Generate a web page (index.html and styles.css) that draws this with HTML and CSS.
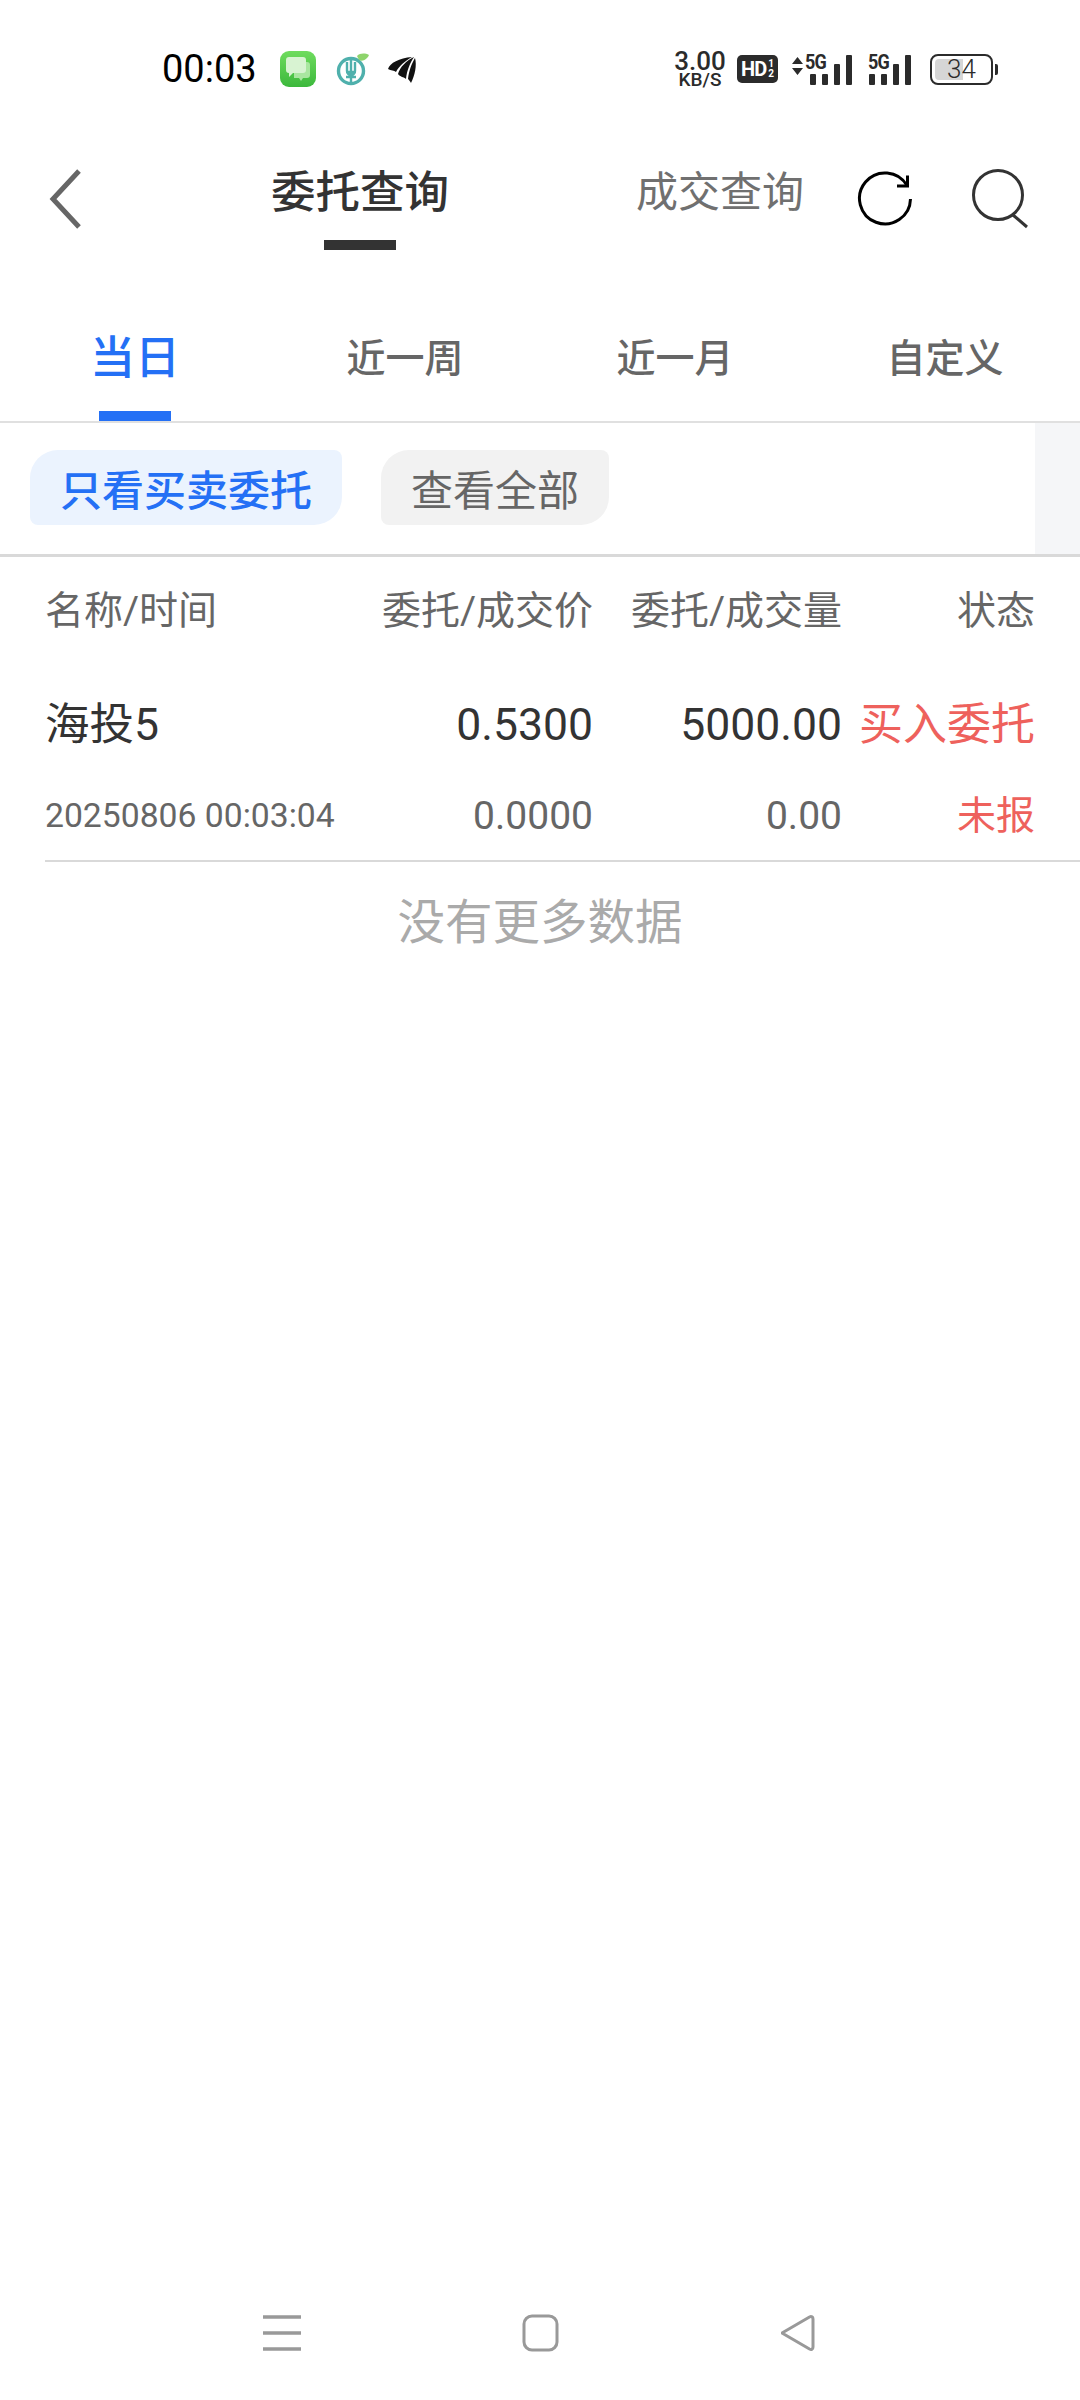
FILE: index.html
```html
<!DOCTYPE html>
<html lang="zh-CN">
<head>
  <meta charset="UTF-8">
  <meta name="viewport" content="width=device-width, initial-scale=1.0">
  <title>委托查询</title>
  <link rel="stylesheet" href="styles.css">
</head>
<body>
  <div class="page">
    <div class="statusbar">
      <span class="clock">00:03</span>
      <svg class="app-icon msg" viewBox="0 0 36 36">
        <defs>
          <linearGradient id="msgBg" x1="0" y1="0" x2="0" y2="1">
            <stop offset="0" stop-color="#6fdc5e"/>
            <stop offset="1" stop-color="#3cb83c"/>
          </linearGradient>
        </defs>
        <rect width="36" height="36" rx="9" fill="url(#msgBg)"/>
        <path d="M14 11h13a3 3 0 0 1 3 3v10a3 3 0 0 1-3 3h-4l-2 3-2-3h-5z" fill="#a9e6a0"/>
        <path d="M9 6h14a3 3 0 0 1 3 3v10a3 3 0 0 1-3 3H13l-4 4v-4a3 3 0 0 1-3-3V9a3 3 0 0 1 3-3z" fill="#d8f3d2"/>
      </svg>
      <svg class="app-icon bank" viewBox="0 0 36 36">
        <circle cx="16" cy="20" r="12.500" fill="none" stroke="#4fb0ac" stroke-width="3.400"/>
        <path d="M12 11v9a4 4 0 0 0 8 0v-9M16 9v22M11 21h10M11 26h10" fill="none" stroke="#4fb0ac" stroke-width="2.400"/>
        <path d="M22 5c3-3 8-3 12-1-2 4-6 7-10 5z" fill="#8ed46c"/>
      </svg>
      <svg class="app-icon plane" viewBox="0 0 30 30">
        <path d="M1 15C3 9 12 4 25 3 18 7 12 12 9 18 7 16 4 17 1 15z" fill="#111"/>
        <path d="M11 20C13 13 19 7 27 3 23 9 20 16 19 25 17 23 13 23 11 20z" fill="#111"/>
        <path d="M21 25C22 16 25 9 28 4 30 11 28 21 24 29 23 27 22 26 21 25z" fill="#111"/>
      </svg>

      <div class="status-right">
        <div class="speed"><b>3.00</b><small>KB/S</small></div>
        <div class="hd">HD<span class="hd-sub"><i>1</i><i>2</i></span></div>
        <div class="signal">
          <svg class="updown" viewBox="0 0 11 18"><path d="M5.500 0 11 7H0zM0 11h11l-5.500 7z" fill="#2b2b2b"/></svg>
          <div class="net">
            <span class="net-label">5G</span>
            <span class="bars"><i class="b1"></i><i class="b2"></i><i class="b3"></i><i class="b4"></i></span>
          </div>
        </div>
        <div class="signal second">
          <div class="net">
            <span class="net-label">5G</span>
            <span class="bars"><i class="b1"></i><i class="b2"></i><i class="b3"></i><i class="b4"></i></span>
          </div>
        </div>
        <div class="battery">
          <div class="battery-fill"></div>
          <span class="battery-num">34</span>
        </div>
        <div class="battery-nub"></div>
      </div>
    </div>

    <div class="topbar">
      <svg class="back" viewBox="0 0 34 60"><path d="M30 2 4 30l26 28" fill="none" stroke="#666" stroke-width="5"/></svg>
      <div class="title-wrap">
        <h1>委托查询</h1>
        <div class="title-mark"></div>
      </div>
      <span class="alt-title">成交查询</span>
      <svg class="refresh" viewBox="0 0 56 56">
        <path d="M50 14.500A25.500 25.500 0 1 0 53.500 28" fill="none" stroke="#000" stroke-width="3"/>
        <path d="M50.500 4.500v10.500H40" fill="none" stroke="#000" stroke-width="3"/>
      </svg>
      <svg class="search" viewBox="0 0 56 60">
        <circle cx="26" cy="26" r="24.500" fill="none" stroke="#333" stroke-width="3"/>
        <path d="M41 46l14 12" fill="none" stroke="#333" stroke-width="3"/>
      </svg>
    </div>

    <div class="tabs">
      <div class="tab active">当日</div>
      <div class="tab">近一周</div>
      <div class="tab">近一月</div>
      <div class="tab">自定义</div>
    </div>

    <div class="filters">
      <span class="chip chip-on">只看买卖委托</span>
      <span class="chip">查看全部</span>
      <div class="filters-side"></div>
    </div>

    <div class="grid head">
      <span class="left">名称/时间</span>
      <span>委托/成交价</span>
      <span>委托/成交量</span>
      <span>状态</span>
    </div>

    <div class="order">
      <div class="grid line-one">
        <span class="left">海投5</span>
        <span>0.5300</span>
        <span>5000.00</span>
        <span class="red">买入委托</span>
      </div>
      <div class="grid line-two">
        <span class="left date">20250806 00:03:04</span>
        <span>0.0000</span>
        <span>0.00</span>
        <span class="red">未报</span>
      </div>
    </div>

    <div class="no-more">没有更多数据</div>

    <div class="navbar">
      <svg viewBox="0 0 38 36"><path d="M0 2h38M0 18h38M0 34h38" fill="none" stroke="#999" stroke-width="3.500"/></svg>
      <svg viewBox="0 0 38 38"><rect x="2" y="2" width="33" height="34" rx="8" fill="none" stroke="#999" stroke-width="3"/></svg>
      <svg viewBox="0 0 38 38"><path d="M1 19 28.500 3c2-1 3.500 0 3.500 2v28c0 2-1.500 3-3.500 2z" fill="none" stroke="#999" stroke-width="3" stroke-linejoin="round"/></svg>
    </div>
  </div>
</body>
</html>
```

FILE: styles.css
```css
* {
  box-sizing: border-box;
}
body {
  margin: 0;
  background: #fff;
  font-family: Roboto, "Noto Sans CJK SC", sans-serif;
  color: #333;
}
.page {
  width: 1080px;
  height: 2400px;
  display: flex;
  flex-direction: column;
  overflow: hidden;
}

/* status bar */
.statusbar {
  height: 138px;
  padding-left: 162px;
  display: flex;
  align-items: center;
}
.clock {
  font-size: 38px;
  color: #000;
  width: 118px;
}
.app-icon {
  display: block;
}
.msg {
  width: 36px;
  height: 36px;
}
.bank {
  width: 36px;
  height: 36px;
  margin-left: 19px;
}
.plane {
  width: 30px;
  height: 30px;
  margin-left: 16px;
}
.status-right {
  margin-left: auto;
  width: 406px;
  display: flex;
  align-items: center;
  color: #2b2b2b;
}
.speed {
  width: 52px;
  margin-right: 11px;
  display: flex;
  flex-direction: column;
  align-items: center;
  line-height: 1;
}
.speed b {
  font-size: 26px;
  font-weight: 500;
  line-height: 21px;
}
.speed small {
  font-size: 19px;
  font-weight: 500;
  line-height: 15px;
}
.hd {
  width: 41px;
  height: 28px;
  background: #2b2b2b;
  border-radius: 5px;
  color: #fff;
  font-size: 20px;
  font-weight: 700;
  letter-spacing: -1px;
  display: flex;
  align-items: center;
  justify-content: center;
}
.hd-sub {
  display: flex;
  flex-direction: column;
  margin-left: 2px;
  font-size: 10px;
  line-height: 10px;
  letter-spacing: 0;
}
.hd-sub i {
  font-style: normal;
}
.signal {
  display: flex;
  align-items: flex-start;
  margin-left: 14px;
  width: 60px;
}
.signal.second {
  margin-left: 16px;
  width: 43px;
}
.updown {
  width: 11px;
  height: 18px;
  margin: 4px 2px 0 0;
  flex: none;
}
.net {
  position: relative;
  width: 47px;
  height: 32px;
}
.net-label {
  position: absolute;
  left: 0;
  top: -3px;
  font-size: 20px;
  font-weight: 700;
  letter-spacing: -1px;
  transform: scaleX(0.9);
  transform-origin: left;
}
.bars {
  position: absolute;
  right: 0;
  bottom: 0;
  display: flex;
  align-items: flex-end;
  gap: 6px;
}
.bars i {
  display: block;
  width: 6px;
  border-radius: 1px;
  background: #2b2b2b;
}
.b1 { height: 11px; }
.b2 { height: 11px; }
.b3 { height: 21px; }
.b4 { height: 30px; }
.battery {
  position: relative;
  margin-left: 19px;
  width: 63px;
  height: 31px;
  border: 2px solid #2b2b2b;
  border-radius: 8px;
  padding: 3px;
}
.battery-fill {
  width: 28px;
  height: 100%;
  background: #d6d6d6;
  border-radius: 4px 0 0 4px;
}
.battery-num {
  position: absolute;
  left: 0;
  right: 0;
  top: 0;
  line-height: 27px;
  text-align: center;
  font-size: 26px;
  font-weight: 300;
  color: #2b2b2b;
}
.battery-nub {
  width: 3px;
  height: 11px;
  margin-left: 2px;
  background: #2b2b2b;
  border-radius: 0 2px 2px 0;
}

/* title row */
.topbar {
  height: 130px;
  display: flex;
  align-items: flex-start;
  padding-left: 49px;
}
.back {
  width: 34px;
  height: 60px;
  margin-top: 31px;
}
.title-wrap {
  margin-left: 189px;
  width: 176px;
  display: flex;
  flex-direction: column;
  align-items: center;
}
h1 {
  margin: 0;
  margin-top: 25px;
  font-size: 44.5px;
  font-weight: 500;
  line-height: 60px;
  color: #333;
  white-space: nowrap;
}
.title-mark {
  width: 72px;
  height: 10px;
  margin-top: 17px;
  background: #333;
}
.alt-title {
  margin-left: 188px;
  margin-top: 25px;
  font-size: 42px;
  line-height: 60px;
  color: #707070;
  white-space: nowrap;
}
.refresh {
  width: 56px;
  height: 56px;
  margin-left: 53px;
  margin-top: 33px;
}
.search {
  width: 56px;
  height: 60px;
  margin-left: 59px;
  margin-top: 31px;
}

/* tabs */
.tabs {
  height: 155px;
  display: flex;
  border-bottom: 2px solid #e0e0e0;
}
.tab {
  position: relative;
  width: 270px;
  padding-top: 60px;
  text-align: center;
  font-size: 39px;
  line-height: 62px;
  color: #666;
  font-weight: 500;
}
.tab.active {
  font-size: 45px;
  color: #2470f5;
}
.tab.active::after {
  content: "";
  position: absolute;
  left: 99px;
  bottom: 0;
  width: 72px;
  height: 10px;
  background: #2470f5;
}

/* filters */
.filters {
  height: 134px;
  padding-left: 30px;
  display: flex;
  align-items: center;
  gap: 39px;
  border-bottom: 3px solid #d9d9d9;
}
.chip {
  height: 75px;
  margin-bottom: 2px;
  padding: 0 30px;
  display: flex;
  align-items: center;
  font-size: 42px;
  color: #666;
  background: #f2f2f2;
  border-radius: 28px 8px 28px 8px;
}
.chip-on {
  color: #2470f5;
  background: #ebf3fe;
  font-weight: 500;
}
.filters-side {
  width: 45px;
  height: 100%;
  margin-left: auto;
  background: #f5f6f8;
}

/* order table */
.grid {
  display: grid;
  grid-template-columns: 1fr 250px 249px 193px;
  padding-left: 45px;
  padding-right: 45px;
  text-align: right;
  white-space: nowrap;
}
.left {
  text-align: left;
}
.head {
  height: 104px;
  padding-top: 26px;
  font-size: 39px;
  line-height: 56px;
  color: #666;
}
.order {
  margin-left: 45px;
  border-bottom: 2px solid #d9d9d9;
}
.order .grid {
  padding-left: 0;
}
.line-one {
  height: 94px;
  padding-top: 34px;
  font-size: 44.5px;
  line-height: 60px;
  color: #333;
}
.line-two {
  height: 105px;
  padding-top: 35px;
  font-size: 39px;
  line-height: 52px;
  color: #666;
}
.date {
  font-size: 33.700px;
}
.red {
  font-size: 44px;
  color: #ee615c;
}
.line-two .red {
  font-size: 39px;
}
.no-more {
  margin-top: 27px;
  text-align: center;
  font-size: 47.500px;
  line-height: 68px;
  color: #aaa;
}

/* bottom nav */
.navbar {
  margin-top: auto;
  height: 86px;
  padding-left: 263px;
  display: flex;
  align-items: flex-start;
  gap: 221px;
}
.navbar svg {
  width: 38px;
  height: 38px;
  display: block;
}
```
